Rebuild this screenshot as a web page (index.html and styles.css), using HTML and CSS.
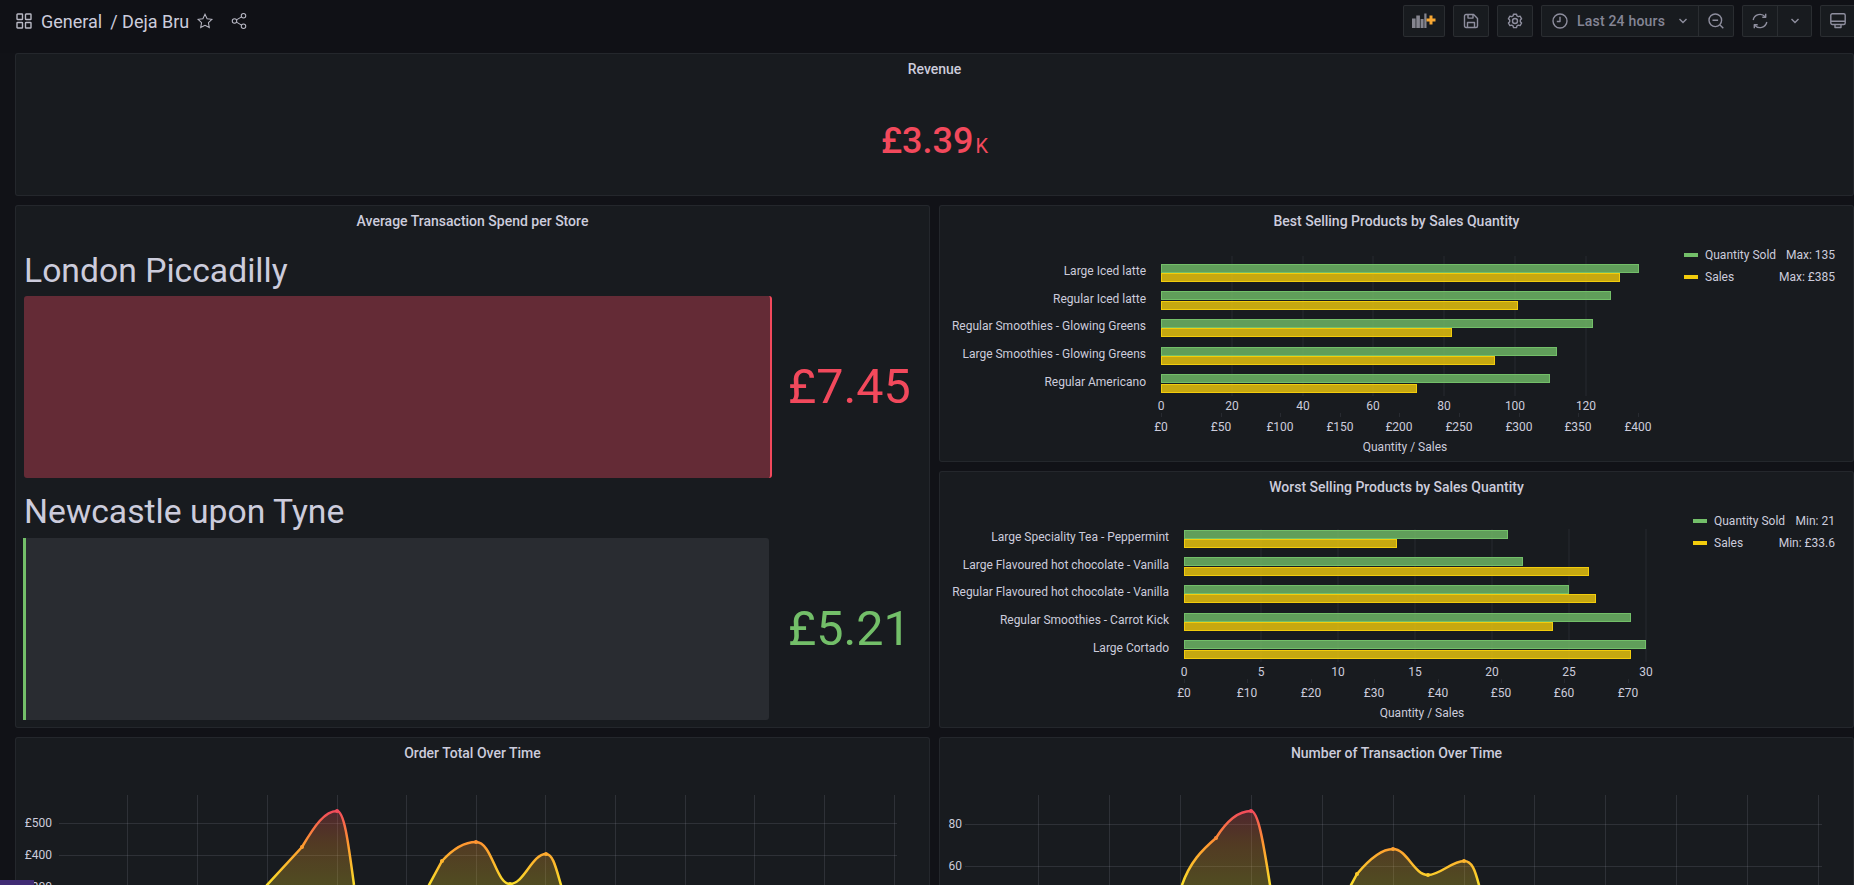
FILE: index.html
```html
<!DOCTYPE html>
<html>
<head>
  <title>Deja Bru - Dashboards</title>
  <link rel="stylesheet" href="styles.css">
</head>
<body>
  <header class="topbar">
    <div class="crumbs">
      <svg class="icon-apps" viewBox="0 0 16 16"><rect x="1" y="1" width="5.5" height="5.5" rx=".6"/><rect x="9.5" y="1" width="5.5" height="5.5" rx=".6"/><rect x="1" y="9.5" width="5.5" height="5.5" rx=".6"/><rect x="9.5" y="9.5" width="5.5" height="5.5" rx=".6"/></svg>
      <span class="crumb-folder">General</span>
      <span class="crumb-name">/ Deja Bru</span>
      <svg class="icon-star" viewBox="0 0 24 24"><path d="M12 3l2.8 5.9 6.4.9-4.6 4.5 1.1 6.4-5.7-3-5.7 3 1.1-6.4-4.6-4.5 6.4-.9z"/></svg>
      <svg class="icon-share" viewBox="0 0 24 24"><circle cx="18" cy="5" r="3"/><circle cx="6" cy="12" r="3"/><circle cx="18" cy="19" r="3"/><path d="M8.600 10.500l6.800-4M8.600 13.500l6.800 4"/></svg>
    </div>
    <div class="toolbar">
      <button class="btn btn-add">
        <svg width="24" height="16" viewBox="0 0 24 16"><path class="bars" d="M0 5.500h3.600V15H0zM4.300 2.500h3.600V15H4.300zM8.600 6h3v9h-3zM12.300 .5h2.200V15h-2.200z"/><path class="plus" d="M17.500 2.500h3v3h3v3h-3v3h-3v-3h-3v-3h3z"/></svg>
      </button>
      <button class="btn btn-icon">
        <svg class="ico" viewBox="0 0 16 16"><path d="M3 1.500h7.600l3.900 3.900V13a1.500 1.500 0 0 1-1.500 1.500H3A1.500 1.500 0 0 1 1.500 13V3A1.500 1.500 0 0 1 3 1.500z"/><path d="M5 1.500v3.600h5V1.500M4.500 14.500V9.500h7v5"/></svg>
      </button>
      <button class="btn btn-icon">
        <svg class="ico" viewBox="0 0 16 16"><circle cx="8" cy="8" r="2.500"/><path d="M6.500 1.200h3l.5 1.800 1.300.7 1.800-.5 1.500 2.600-1.300 1.300v1.600l1.300 1.300-1.500 2.600-1.800-.5-1.300.7-.5 1.800h-3l-.5-1.800-1.300-.7-1.800.5-1.500-2.600 1.300-1.300V7.100L1.400 5.800l1.500-2.600 1.800.5L6 3z"/></svg>
      </button>
      <div class="btn-group group-time">
        <button class="btn btn-time">
          <svg class="ico" viewBox="0 0 16 16"><circle cx="8" cy="8" r="7"/><path d="M8 3.800V8.500H4.800"/></svg>
          <span class="time-text">Last 24 hours</span>
          <svg class="chev" viewBox="0 0 10 6"><path d="M1.500 1l3.500 3.500L8.500 1"/></svg>
        </button>
        <button class="btn btn-icon">
          <svg class="ico" viewBox="0 0 16 16"><circle cx="7.300" cy="7.300" r="6.300"/><path d="M4.500 7.300h5.600M12 12l3.300 3.300"/></svg>
        </button>
      </div>
      <div class="btn-group group-refresh">
        <button class="btn btn-icon">
          <svg class="ico" viewBox="0 0 16 16"><path d="M1.200 7a6.900 6.900 0 0 1 12-3.200M14.800 9a6.900 6.900 0 0 1-12 3.200"/><path d="M13.700 .8v3.400h-3.400M2.300 15.200v-3.400h3.400"/></svg>
        </button>
        <button class="btn btn-chev">
          <svg class="chev" viewBox="0 0 10 6"><path d="M1.500 1l3.500 3.500L8.500 1"/></svg>
        </button>
      </div>
      <button class="btn btn-icon btn-tv">
        <svg class="ico" viewBox="0 0 16 16"><rect x=".8" y=".8" width="14.400" height="10.700" rx="1.500"/><path d="M.8 8.300h14.400M5 11.500v3h6v-3"/></svg>
      </button>
    </div>
  </header>

  <main class="dashboard">
    <section class="panel panel-revenue">
      <h2 class="panel-title">Revenue</h2>
      <div class="stat"><span class="stat-value">£3.39</span><span class="stat-unit">K</span></div>
    </section>

    <section class="panel panel-gauges">
      <h2 class="panel-title">Average Transaction Spend per Store</h2>
      <div class="gauge">
        <div class="gauge-label">London Piccadilly</div>
        <div class="gauge-row">
          <div class="gauge-bar gauge-bar-red"></div>
          <div class="gauge-value red">£7.45</div>
        </div>
      </div>
      <div class="gauge">
        <div class="gauge-label">Newcastle upon Tyne</div>
        <div class="gauge-row">
          <div class="gauge-bar gauge-bar-green"></div>
          <div class="gauge-value green">£5.21</div>
        </div>
      </div>
    </section>

    <section class="panel">
      <h2 class="panel-title">Best Selling Products by Sales Quantity</h2>
      <svg class="chart chart-bars" viewBox="940 237 913 225">
        <g class="grid">
          <path d="M1232 256V396M1303 256V396M1373 256V396M1444 256V396M1515 256V396M1586 256V396"/>
          <path d="M1161.500 413v4M1221.500 413v4M1280.500 413v4M1340.500 413v4M1399.500 413v4M1459.500 413v4M1519.500 413v4M1578.500 413v4M1638.500 413v4"/>
        </g>
        <g class="green-bar">
          <rect x="1161.500" y="264.500" width="477" height="8"/>
          <rect x="1161.500" y="291.500" width="449" height="8"/>
          <rect x="1161.500" y="319.500" width="431" height="8"/>
          <rect x="1161.500" y="347.500" width="395" height="8"/>
          <rect x="1161.500" y="374.500" width="388" height="8"/>
        </g>
        <g class="yellow-bar">
          <rect x="1161.500" y="273.500" width="458" height="8"/>
          <rect x="1161.500" y="301.500" width="356" height="8"/>
          <rect x="1161.500" y="328.500" width="290" height="8"/>
          <rect x="1161.500" y="356.500" width="333" height="8"/>
          <rect x="1161.500" y="384.500" width="255" height="8"/>
        </g>
        <g class="cat-label">
          <text x="1146" y="275">Large Iced latte</text>
          <text x="1146" y="303">Regular Iced latte</text>
          <text x="1146" y="330">Regular Smoothies - Glowing Greens</text>
          <text x="1146" y="358">Large Smoothies - Glowing Greens</text>
          <text x="1146" y="386">Regular Americano</text>
        </g>
        <g class="tick-label">
          <text x="1161" y="410">0</text><text x="1232" y="410">20</text><text x="1303" y="410">40</text><text x="1373" y="410">60</text><text x="1444" y="410">80</text><text x="1515" y="410">100</text><text x="1586" y="410">120</text>
          <text x="1161" y="431">£0</text><text x="1221" y="431">£50</text><text x="1280" y="431">£100</text><text x="1340" y="431">£150</text><text x="1399" y="431">£200</text><text x="1459" y="431">£250</text><text x="1519" y="431">£300</text><text x="1578" y="431">£350</text><text x="1638" y="431">£400</text>
          <text x="1405" y="451">Quantity / Sales</text>
        </g>
      </svg>
      <div class="legend legend-best">
        <div class="legend-row"><i class="swatch swatch-green"></i><span class="legend-name">Quantity Sold</span><span class="legend-stat">Max: 135</span></div>
        <div class="legend-row"><i class="swatch swatch-yellow"></i><span class="legend-name">Sales</span><span class="legend-stat">Max: £385</span></div>
      </div>
    </section>

    <section class="panel">
      <h2 class="panel-title">Worst Selling Products by Sales Quantity</h2>
      <svg class="chart chart-bars" viewBox="940 503 913 225">
        <g class="grid">
          <path d="M1261 529V662M1338 529V662M1415 529V662M1492 529V662M1569 529V662M1646 529V662"/>
          <path d="M1184.500 679v4M1247.500 679v4M1311.500 679v4M1374.500 679v4M1438.500 679v4M1501.500 679v4M1564.500 679v4M1628.500 679v4"/>
        </g>
        <g class="green-bar">
          <rect x="1184.500" y="530.500" width="323" height="8"/>
          <rect x="1184.500" y="557.500" width="338" height="8"/>
          <rect x="1184.500" y="585.500" width="384" height="8"/>
          <rect x="1184.500" y="613.500" width="446" height="8"/>
          <rect x="1184.500" y="640.500" width="461" height="8"/>
        </g>
        <g class="yellow-bar">
          <rect x="1184.500" y="539.500" width="212" height="8"/>
          <rect x="1184.500" y="567.500" width="404" height="8"/>
          <rect x="1184.500" y="594.500" width="411" height="8"/>
          <rect x="1184.500" y="622.500" width="368" height="8"/>
          <rect x="1184.500" y="650.500" width="446" height="8"/>
        </g>
        <g class="cat-label">
          <text x="1169" y="541">Large Speciality Tea - Peppermint</text>
          <text x="1169" y="569">Large Flavoured hot chocolate - Vanilla</text>
          <text x="1169" y="596">Regular Flavoured hot chocolate - Vanilla</text>
          <text x="1169" y="624">Regular Smoothies - Carrot Kick</text>
          <text x="1169" y="652">Large Cortado</text>
        </g>
        <g class="tick-label">
          <text x="1184" y="676">0</text><text x="1261" y="676">5</text><text x="1338" y="676">10</text><text x="1415" y="676">15</text><text x="1492" y="676">20</text><text x="1569" y="676">25</text><text x="1646" y="676">30</text>
          <text x="1184" y="697">£0</text><text x="1247" y="697">£10</text><text x="1311" y="697">£20</text><text x="1374" y="697">£30</text><text x="1438" y="697">£40</text><text x="1501" y="697">£50</text><text x="1564" y="697">£60</text><text x="1628" y="697">£70</text>
          <text x="1422" y="717">Quantity / Sales</text>
        </g>
      </svg>
      <div class="legend legend-worst">
        <div class="legend-row"><i class="swatch swatch-green"></i><span class="legend-name">Quantity Sold</span><span class="legend-stat">Min: 21</span></div>
        <div class="legend-row"><i class="swatch swatch-yellow"></i><span class="legend-name">Sales</span><span class="legend-stat">Min: £33.6</span></div>
      </div>
    </section>

    <section class="panel panel-time">
      <h2 class="panel-title">Order Total Over Time</h2>
      <svg class="chart chart-time" viewBox="16 769 913 116">
        <defs>
          <linearGradient id="heatA" gradientUnits="userSpaceOnUse" x1="0" y1="810" x2="0" y2="885">
            <stop offset="0" stop-color="#f2495c"/><stop offset=".45" stop-color="#ff9830"/><stop offset="1" stop-color="#fade2a"/>
          </linearGradient>
        </defs>
        <path class="grid-time" d="M127.500 795V889M197.500 795V889M267.500 795V889M337.500 795V889M406.500 795V889M476.500 795V889M545.500 795V889M615.500 795V889M685.500 795V889M754.500 795V889M824.500 795V889M894.500 795V889M59 823.500H897M59 855.500H897"/>
        <path class="area" d="M258 900L267 885L302 847C315 825 325 811 337 811C344 811 348 840 354 885L357 900Z"/>
        <path class="area" d="M425 900L429 885L442 861C452 850 464 842 476 842C492 842 496 884 510 884C524 884 532 854 546 854C553 854 556 868 561 885L565 900Z"/>
        <path class="line" d="M258 900L267 885L302 847C315 825 325 811 337 811C344 811 348 840 354 885L357 900"/>
        <path class="line" d="M425 900L429 885L442 861C452 850 464 842 476 842C492 842 496 884 510 884C524 884 532 854 546 854C553 854 556 868 561 885L565 900"/>
        <g class="points">
          <circle cx="302" cy="847" r="2"/><circle cx="337" cy="811" r="2"/><circle cx="442" cy="861" r="2"/><circle cx="476" cy="842" r="2"/><circle cx="510" cy="884" r="2"/><circle cx="546" cy="854" r="2"/>
        </g>
        <g class="axis-label">
          <text x="52" y="827">£500</text><text x="52" y="859">£400</text><text x="52" y="891">£300</text>
        </g>
      </svg>
    </section>

    <section class="panel panel-time">
      <h2 class="panel-title">Number of Transaction Over Time</h2>
      <svg class="chart chart-time" viewBox="940 769 913 116">
        <path class="grid-time" d="M1038.500 795V889M1109.500 795V889M1180.500 795V889M1251.500 795V889M1322.500 795V889M1393.500 795V889M1464.500 795V889M1534.500 795V889M1605.500 795V889M1676.500 795V889M1747.500 795V889M1818.500 795V889M965 824.500H1822M965 866.500H1822"/>
        <path class="area" d="M1176 900L1182 885C1190 862 1202 850 1216 838C1226 822 1238 811 1251 811C1258 811 1263 840 1270 885L1272 900Z"/>
        <path class="area" d="M1347 900L1351 885L1357 874C1367 862 1380 849 1393 849C1407 849 1414 875 1428 875C1440 875 1452 861 1464 861C1472 861 1475 870 1479 885L1482 900Z"/>
        <path class="line" d="M1176 900L1182 885C1190 862 1202 850 1216 838C1226 822 1238 811 1251 811C1258 811 1263 840 1270 885L1272 900"/>
        <path class="line" d="M1347 900L1351 885L1357 874C1367 862 1380 849 1393 849C1407 849 1414 875 1428 875C1440 875 1452 861 1464 861C1472 861 1475 870 1479 885L1482 900"/>
        <g class="points">
          <circle cx="1216" cy="838" r="2"/><circle cx="1251" cy="811" r="2"/><circle cx="1357" cy="874" r="2"/><circle cx="1393" cy="849" r="2"/><circle cx="1428" cy="875" r="2"/><circle cx="1464" cy="861" r="2"/>
        </g>
        <g class="axis-label">
          <text x="962" y="828">80</text><text x="962" y="870">60</text>
        </g>
      </svg>
    </section>
  </main>
  <div class="corner-tab"></div>
</body>
</html>
```

FILE: styles.css
```css
* {
  box-sizing: border-box;
}

html,
body {
  margin: 0;
  height: 885px;
  overflow: hidden;
}

body {
  background-color: #111217;
  color: #ccccdc;
  font-family: Roboto, "Liberation Sans", sans-serif;
  font-size: 12px;
}

/* top bar */

.topbar {
  display: flex;
  justify-content: space-between;
  height: 53px;
  padding: 5px 0 0 16px;
  background-color: #101116;
}

.crumbs {
  display: flex;
  align-items: center;
  height: 32px;
  font-size: 18px;
  color: #ccccdc;
}

.crumbs svg {
  fill: none;
  stroke: #b8b8c4;
  stroke-width: 1.4;
  flex: none;
}

.icon-apps {
  width: 16px;
  height: 16px;
  margin-right: 9px;
}

.crumb-folder {
  margin-right: 8px;
}

.icon-star {
  width: 18px;
  height: 18px;
  margin-left: 7px;
}

.icon-share {
  width: 18px;
  height: 18px;
  margin-left: 16px;
}

.toolbar {
  display: flex;
  gap: 8px;
  margin-right: -2px;
}

.btn-group {
  display: flex;
}

.btn {
  display: flex;
  align-items: center;
  justify-content: center;
  height: 32px;
  padding: 0;
  background-color: #181b1f;
  border: 1px solid rgba(204, 204, 220, 0.1);
  border-radius: 2px;
  color: #8e8e9e;
  font-family: inherit;
}

.btn-group .btn:first-child {
  border-radius: 2px 0 0 2px;
}

.btn-group .btn:last-child {
  border-left: 1px solid rgba(204, 204, 220, 0.1);
  border-radius: 0 2px 2px 0;
  margin-left: -1px;
}

.btn-add {
  width: 42px;
}

.btn-add .bars {
  fill: #85858f;
}

.btn-add .plus {
  fill: #f7a733;
}

.btn-icon {
  width: 36px;
}

.ico {
  width: 16px;
  height: 16px;
  fill: none;
  stroke: #8e8e9e;
  stroke-width: 1.4;
  stroke-linejoin: round;
}

.chev {
  width: 10px;
  height: 6px;
  fill: none;
  stroke: #8e8e9e;
  stroke-width: 1.4;
}

.btn-time {
  justify-content: flex-start;
  width: 158px;
  padding-left: 10px;
}

.time-text {
  margin-left: 9px;
  margin-right: 13px;
  font-size: 14px;
  font-weight: 500;
  letter-spacing: 0.2px;
  color: #858595;
}

.btn-chev {
  width: 35px;
}

/* panels */

.dashboard {
  display: grid;
  grid-template-columns: 915px 915px;
  grid-template-rows: 143px 257px 257px 300px;
  gap: 9px;
  padding-left: 15px;
}

.panel {
  position: relative;
  background-color: #181b1f;
  border: 1px solid rgba(204, 204, 220, 0.07);
  border-radius: 3px;
  overflow: hidden;
}

.panel-revenue {
  grid-column: 1 / 3;
}

.panel-gauges {
  grid-column: 1;
  grid-row: 2 / 4;
}

.panel-title {
  height: 31px;
  margin: 0;
  padding-top: 6px;
  font-size: 14px;
  font-weight: 500;
  line-height: 19px;
  text-align: center;
  color: #ccccdc;
}

.stat {
  display: flex;
  justify-content: center;
  align-items: baseline;
  margin-top: 32px;
  line-height: 48px;
  font-weight: 400;
  color: #f2495c;
}

.stat-value {
  font-size: 36px;
  font-weight: 500;
}

.stat-unit {
  margin-left: 2px;
  font-size: 20px;
}

/* bar gauges */

.gauge {
  padding-left: 8px;
}

.gauge-label {
  display: flex;
  align-items: flex-end;
  height: 60px;
  padding-bottom: 6px;
  font-size: 33.700px;
  line-height: 40px;
  color: #ccccdc;
}

.gauge:first-of-type .gauge-label {
  height: 59px;
  padding-bottom: 5px;
}

.gauge-row {
  display: flex;
  align-items: center;
  height: 182px;
}

.gauge-bar {
  height: 182px;
  border-radius: 3px;
}

.gauge-bar-red {
  width: 748px;
  margin-right: 16px;
  background-color: #642b36;
  border-right: 2px solid #f2495c;
}

.gauge-bar-green {
  width: 746px;
  margin-left: -1px;
  margin-right: 19px;
  background-color: #292c31;
  border-left: 3px solid #73bf69;
  border-radius: 0 3px 3px 0;
}

.gauge-value {
  font-size: 48.500px;
  line-height: 60px;
}

.red {
  color: #f2495c;
}

.green {
  color: #73bf69;
}

/* charts */

.chart {
  display: block;
  width: 913px;
}

.chart-bars {
  height: 225px;
}

.chart-time {
  height: 116px;
}

.chart text {
  font-family: Roboto, "Liberation Sans", sans-serif;
  font-size: 12px;
  fill: #ccccdc;
}

.grid path,
.grid-time {
  fill: none;
  stroke: rgba(204, 204, 220, 0.09);
  stroke-width: 1;
}

.grid-time {
  stroke: rgba(204, 204, 220, 0.13);
}

.green-bar rect {
  fill: #73bf69;
  fill-opacity: 0.8;
  stroke: #73bf69;
  stroke-width: 1;
}

.yellow-bar rect {
  fill: #f2cc0c;
  fill-opacity: 0.8;
  stroke: #f2cc0c;
  stroke-width: 1;
}

.cat-label text,
.axis-label text {
  text-anchor: end;
}

.tick-label text {
  text-anchor: middle;
}

.area {
  fill: url(#heatA);
  fill-opacity: 0.25;
}

.line {
  fill: none;
  stroke: url(#heatA);
  stroke-width: 2.500;
}

.points circle {
  fill: url(#heatA);
}

/* legend */

.legend {
  position: absolute;
  right: 18px;
  font-size: 12px;
}

.legend-best {
  top: 38px;
  width: 151px;
}

.legend-worst {
  top: 38px;
  width: 142px;
}

.legend-row {
  display: flex;
  align-items: center;
  height: 22px;
}

.swatch {
  width: 14px;
  height: 4px;
  margin-right: 7px;
}

.swatch-green {
  background-color: #73bf69;
}

.swatch-yellow {
  background-color: #f2cc0c;
}

.legend-stat {
  margin-left: auto;
}

.corner-tab {
  position: fixed;
  left: 0;
  top: 880px;
  width: 34px;
  height: 5px;
  background-color: #3f2b73;
}
```
